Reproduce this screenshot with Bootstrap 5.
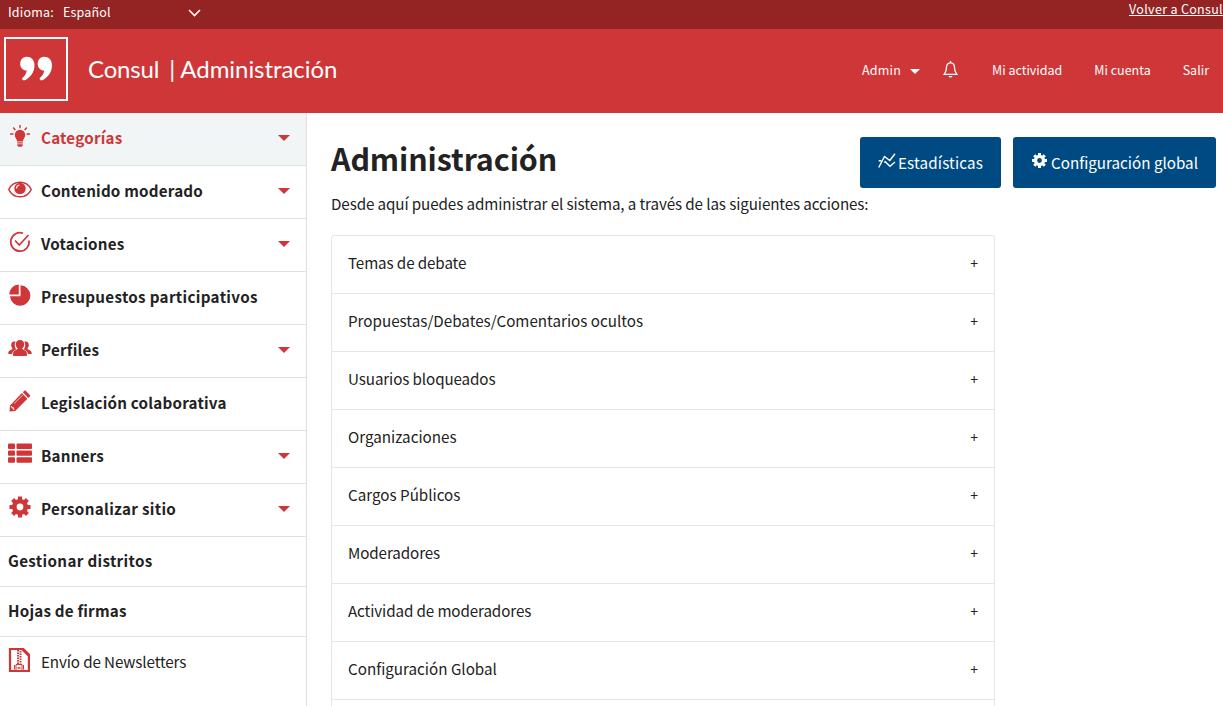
<!DOCTYPE html>
<html lang="es">
<head>
<meta charset="utf-8">
<meta name="viewport" content="width=device-width, initial-scale=1">
<title>Administración</title>
<link href="https://cdn.jsdelivr.net/npm/bootstrap@5.3.0/dist/css/bootstrap.min.css" rel="stylesheet">
<style>
:root { --brand: #cf3638; --brand-dark: #942423; --ink: #222; --line: #dee0e3; --action: #004a83; }
body { font-family: "Noto Sans CJK SC", "Open Sans", sans-serif; font-size: 15.2px; line-height: 24px; color: var(--ink); height: 706px; overflow: hidden; }
a { color: inherit; text-decoration: none; }
.top-links { height: 29px; background: var(--brand-dark); color: #fff; font-size: 12.5px; line-height: 20px; }
.lang { padding: 2px 0 0 8px; letter-spacing: .2px; }
.lang-select { width: 138px; margin-left: 9px; height: 20px; }
.lang-select svg { margin-top: 2px; }
.back-link { letter-spacing: .32px; line-height: 18px; }
.top-header { height: 84px; background: var(--brand); color: #fff; padding-left: 4px; }
.brand-mark { margin-top: -4px; }
.site-title { font: 24px/36px Lato, sans-serif; margin: -4px 0 0 20px; letter-spacing: -.05px; }
.site-title .sep { margin: 0 5px 0 10px; }
.site-title .first { letter-spacing: -.15px; }
.account { font-size: 12.5px; padding: 0 14px 2px 0; }
.account .user { letter-spacing: .2px; }
.account .tri-sm { margin: 2px 0 0 9px; }
.bell { margin: -2px 34px 0 23px; }
.tri { width: 0; height: 0; border: 6px solid transparent; border-top-color: var(--brand); border-bottom: 0; }
.tri-sm { border-width: 5px 5px 0; border-top-color: #fff; }
.side { width: 307px; height: 593px; border-right: 1px solid var(--line); }
.side a { height: 53px; border-bottom: 1px solid var(--line); padding: 0 16px 3px 8px; font-weight: 700; letter-spacing: .2px; }
.side a.current { background: #f1f5f6; color: var(--brand); }
.side a.plain { height: 50px; padding-bottom: 1px; }
.side a.last-link { font-weight: 400; border: 0; padding-bottom: 0; height: 50px; letter-spacing: -.12px; }
.side a span { margin-top: -2px; }
.side a.wide { letter-spacing: .32px; }
.side svg { width: 24px; height: 24px; margin: -4px 9px 0 0; color: var(--brand); flex: none; }
.main-area { padding: 24px 7px 0 24px; }
h1 { font-size: 30.4px; line-height: 42px; font-weight: 700; margin: 0; letter-spacing: -.1px; }
.act { background: var(--action); color: #fff; border: 0; border-radius: 3px; font-size: 15.2px; line-height: 24px; height: 51px; padding: 0 18px; }
.act:hover { background: #003a66; color: #fff; }
.act span { margin-top: -1px; }
.stats { letter-spacing: .16px; }
.trend { margin: -3px 2px 0 0; }
.cog { margin: -5px 3px 0 0; }
.intro { margin: 3px 0 20px; letter-spacing: -.105px; }
.topics { width: 664px; height: 471px; border: 1px solid #e6e6e6; border-bottom: 0; border-radius: 3px 3px 0 0; }
.topics a { height: 58px; border-bottom: 1px solid #e6e6e6; padding: 0 16px 5px; }
.topics .tight { letter-spacing: -.11px; }
.topics .plus { font-size: 14px; padding-top: 1px; }
</style>
</head>
<body>
<div class="top-links d-flex justify-content-between">
  <div class="lang d-flex"><span>Idioma:</span>
    <div class="lang-select d-flex justify-content-between align-items-center"><span>Español</span>
      <svg width="13" height="8" viewBox="0 0 13 8" fill="none" stroke="#fff" stroke-width="1.6"><path d="M1 1l5.500 5.500L12 1"/></svg></div>
  </div>
  <a href="#" class="back-link text-decoration-underline">Volver a Consul</a>
</div>
<header class="top-header d-flex align-items-center">
  <svg class="brand-mark" width="64" height="64" viewBox="0 0 64 64"><rect x="1" y="1" width="62" height="62" fill="none" stroke="#fff" stroke-width="2"/><g fill="#fff"><path id="q" d="M22.600 19.800c4.600 0 7.900 3.300 7.900 8.400 0 7-4.400 12.500-9.700 15-1.700.7-3.600-1.200-2.200-2.500 2.300-2 3.800-4.300 4.200-7.200-3.900.2-6.600-2.900-6.600-6.500 0-4.100 2.700-7.200 6.400-7.200z"/><use href="#q" x="17.500"/></g></svg>
  <div class="site-title d-flex"><span class="first">Consul</span><span class="sep">|</span><span>Administración</span></div>
  <nav class="account ms-auto d-flex align-items-center">
    <a href="#" class="user d-flex align-items-center">Admin <i class="tri tri-sm"></i></a>
    <svg class="bell" width="15" height="17" viewBox="0 0 15 17" fill="none" stroke="#fff" stroke-width="1.300"><path d="M7.500 1.800C4.700 1.800 3.500 4 3.500 6.500c0 3.500-.6 4.800-2.300 6.800h12.600c-1.700-2-2.300-3.300-2.300-6.800 0-2.500-1.200-4.700-4-4.700z"/><path d="M7.500 0v2M6 15.200c.6 1 2.400 1 3 0"/></svg>
    <a href="#">Mi actividad</a><a href="#" class="mx-4 px-2">Mi cuenta</a><a href="#">Salir</a>
  </nav>
</header>
<div class="d-flex">
  <nav class="side flex-shrink-0">
    <a href="#" class="current d-flex align-items-center"><svg viewBox="0 0 24 24" fill="currentColor"><path d="M12 5.800a5.200 5.200 0 0 0-5.200 5.300c0 2.800 2 3.900 2.400 6.400h5.600c.4-2.500 2.400-3.600 2.400-6.400A5.200 5.200 0 0 0 12 5.800zM9.300 18.200h5.500v1.300H9.300zM9.300 20.300h5.500v1.200l-1.300 1.300h-3l-1.200-1.300z"/><path d="M12 1v3.300M5.200 3.500L7.400 6M18.800 3.500L16.600 6M2 10h3.500M18.500 10H22" stroke="currentColor" stroke-width="1.400"/></svg><span>Categorías</span><i class="tri ms-auto"></i></a>
    <a href="#" class="d-flex align-items-center"><svg viewBox="0 0 24 24"><path d="M.8 12.500C5 2.800 19 2.800 23.200 12.500 19 22.200 5 22.200.8 12.500z" fill="none" stroke="currentColor" stroke-width="1.500"/><circle cx="12" cy="11.500" r="5.700" fill="currentColor"/><path d="M8.500 11.500c0-2 1.200-3.300 3-3.500" stroke="#fff" stroke-width="1.200" fill="none"/></svg><span>Contenido moderado</span><i class="tri ms-auto"></i></a>
    <a href="#" class="d-flex align-items-center"><svg viewBox="0 0 24 24" fill="none" stroke="currentColor" stroke-width="1.700"><path d="M15 3.300A9.200 9.200 0 1 0 21 10.500M7 10.500l4.300 4.500L20.500 5"/></svg><span>Votaciones</span><i class="tri ms-auto"></i></a>
    <a href="#" class="wide d-flex align-items-center"><svg viewBox="0 0 24 24" fill="currentColor"><path d="M10.800 1.500v10H1.300a10 10 0 0 1 9.500-10zM12.500 2.300A10.200 10.200 0 1 1 2 13.300h10.500z"/></svg><span>Presupuestos participativos</span></a>
    <a href="#" class="d-flex align-items-center"><svg viewBox="0 0 24 24" fill="currentColor"><path d="M12 4c2.700 0 4.200 1.800 4.200 4.300 0 2-.9 3.500-2 4.300 0 1.300 4.700 1.400 4.700 5V20H5.100v-2.400c0-3.600 4.700-3.700 4.700-5-1.100-.8-2-2.300-2-4.300C7.800 5.800 9.300 4 12 4z"/><path d="M7.700 5.800C5 4.700 3.200 6.300 3.200 9c0 1.700.6 2.700 1.400 3.500 0 1.500-4.300 1.400-4.300 4.500v1h3.800c.2-2.500 1.700-3.500 4-4.500-1.500-2.500-2-5-.4-7.700zM16.300 5.800C19 4.700 20.800 6.300 20.800 9c0 1.700-.6 2.700-1.400 3.500 0 1.500 4.300 1.400 4.300 4.500v1h-3.800c-.2-2.500-1.700-3.500-4-4.500 1.500-2.500 2-5 .4-7.700z"/></svg><span>Perfiles</span><i class="tri ms-auto"></i></a>
    <a href="#" class="d-flex align-items-center"><svg viewBox="0 0 24 24" fill="currentColor"><path d="M17.700 1.700l4.200 4.200c.5.500.4 1 0 1.500l-1.600 1.500L14.800 3.200l1.500-1.500c.5-.4 1-.4 1.400 0zM13.900 4.100l5.500 5.600L7.200 21.900l-5.700.5.500-6z"/><path d="M3 17.300l1 1 1 .2.200 1.200 1 1" stroke="#fff" stroke-width="1.200" fill="none"/><path d="M6 14.700l9-9" stroke="#fff" stroke-width=".7"/></svg><span>Legislación colaborativa</span></a>
    <a href="#" class="d-flex align-items-center"><svg viewBox="0 0 24 24" fill="currentColor"><rect y="1.500" width="7" height="5.400" rx="1"/><rect x="8.500" y="1.500" width="15.500" height="5.400" rx="1"/><rect y="8.400" width="7" height="5.400" rx="1"/><rect x="8.500" y="8.400" width="15.500" height="5.400" rx="1"/><rect y="15.300" width="7" height="5.400" rx="1"/><rect x="8.500" y="15.300" width="15.500" height="5.400" rx="1"/></svg><span>Banners</span><i class="tri ms-auto"></i></a>
    <a href="#" class="wide d-flex align-items-center"><svg viewBox="0 0 24 24"><g id="gear"><circle cx="12" cy="12" r="5.700" fill="none" stroke="currentColor" stroke-width="4.600"/><path d="M12 1.500v4M12 18.500v4M1.500 12h4M18.500 12h4M4.600 4.600l2.800 2.800M16.600 16.600l2.800 2.800M4.600 19.400l2.800-2.800M16.600 7.400l2.800-2.800" stroke="currentColor" stroke-width="4.200"/></g></svg><span>Personalizar sitio</span><i class="tri ms-auto"></i></a>
    <a href="#" class="plain wide d-flex align-items-center"><span>Gestionar distritos</span></a>
    <a href="#" class="plain d-flex align-items-center"><span>Hojas de firmas</span></a>
    <a href="#" class="last-link d-flex align-items-center"><svg viewBox="0 0 24 24"><path d="M2 1h13l5.900 5.800V23H2z" fill="none" stroke="currentColor" stroke-width="2.200"/><path d="M14.500 1L21 7.500" stroke="currentColor" stroke-width="3"/><path d="M10 2v14M12.500 3v13" stroke="currentColor" stroke-width="2" stroke-dasharray="1.500 1"/><path d="M6.500 21.500V17M15.500 21.500V17" stroke="currentColor"/><path d="M8 16.500h6v6H8z" fill="#fff" stroke="currentColor"/><path d="M9.500 20h3" stroke="currentColor" stroke-width="1.500"/></svg><span>Envío de Newsletters</span></a>
  </nav>
  <main class="main-area flex-grow-1">
    <div class="d-flex justify-content-between">
      <h1>Administración</h1>
      <div class="d-flex" style="gap:12px">
        <a href="#" class="act stats btn d-flex align-items-center"><svg class="trend" width="18" height="16" viewBox="0 0 18 16" fill="none" stroke="#fff" stroke-width="1.400"><path d="M.7 14.500L6.500 3.500l5.300 4L17 .8M.7 7.800h2.500M6.300 9.500l.9-.8 4.800 4.600 5-4.300"/></svg><span>Estadísticas</span></a>
        <a href="#" class="act btn d-flex align-items-center"><svg class="cog" width="17" height="17" viewBox="0 0 24 24"><use href="#gear"/></svg><span>Configuración global</span></a>
      </div>
    </div>
    <p class="intro">Desde aquí puedes administrar el sistema, a través de las siguientes acciones:</p>
    <div class="topics">
      <a href="#" class="tight d-flex align-items-center justify-content-between"><span>Temas de debate</span><span class="plus">+</span></a>
      <a href="#" class="d-flex align-items-center justify-content-between"><span>Propuestas/Debates/Comentarios ocultos</span><span class="plus">+</span></a>
      <a href="#" class="tight d-flex align-items-center justify-content-between"><span>Usuarios bloqueados</span><span class="plus">+</span></a>
      <a href="#" class="d-flex align-items-center justify-content-between"><span>Organizaciones</span><span class="plus">+</span></a>
      <a href="#" class="d-flex align-items-center justify-content-between"><span>Cargos Públicos</span><span class="plus">+</span></a>
      <a href="#" class="tight d-flex align-items-center justify-content-between"><span>Moderadores</span><span class="plus">+</span></a>
      <a href="#" class="tight d-flex align-items-center justify-content-between"><span>Actividad de moderadores</span><span class="plus">+</span></a>
      <a href="#" class="d-flex align-items-center justify-content-between"><span>Configuración Global</span><span class="plus">+</span></a>
    </div>
  </main>
</div>
<script src="https://cdn.jsdelivr.net/npm/bootstrap@5.3.0/dist/js/bootstrap.bundle.min.js"></script>
</body>
</html>
